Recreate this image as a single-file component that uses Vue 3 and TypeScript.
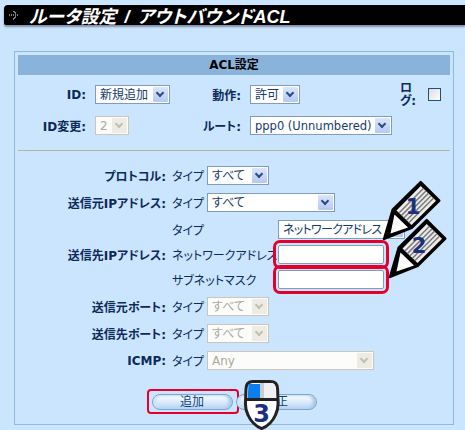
<template>
  <div class="page">
    <h1 class="title-bar">
      <svg class="title-mark" viewBox="0 0 9 9">
        <path d="M0 4h1M2 4h1M4 4h1M6 4h1M8 4h1M6 2h1M6 6h1M4 0h1M4 8h1M5 1h1M5 7h1" stroke="#fff" stroke-width="1" />
      </svg>
      ルータ設定 / アウトバウンドACL
    </h1>

    <section class="panel">
      <div class="panel-head">ACL設定</div>

      <div class="top-grid">
        <label class="field-label">ID:</label>
        <span class="select w-75">
          <select><option>新規追加</option></select>
        </span>
        <label class="field-label">動作:</label>
        <span class="select w-50">
          <select><option>許可</option></select>
        </span>
        <label class="log-label">ログ:</label>
        <span class="checkbox"></span>

        <label class="field-label">ID変更:</label>
        <span class="select w-34 disabled">
          <select disabled><option>2</option></select>
        </span>
        <label class="field-label">ルート:</label>
        <span class="select w-142 compact">
          <select><option>ppp0 (Unnumbered)</option></select>
        </span>
      </div>

      <hr class="divider" />

      <div class="form-grid">
        <template v-for="row in upperRows" :key="row.label">
          <label class="field-label">{{ row.label }}:</label>
          <div class="type-cell">
            <span class="type-label">タイプ</span>
            <span class="select" :class="row.width">
              <select><option>すべて</option></select>
            </span>
          </div>
        </template>

        <label class="field-label">送信先IPアドレス:</label>
        <div class="dest-grid">
          <span class="type-label">タイプ</span>
          <span class="select w-127 tight">
            <select><option>ネットワークアドレス</option></select>
          </span>
          <span class="type-label">ネットワークアドレス</span>
          <input class="text-input marked" type="text" />
          <span class="type-label">サブネットマスク</span>
          <input class="text-input marked" type="text" />
        </div>

        <template v-for="row in lowerRows" :key="row.label">
          <label class="field-label">{{ row.label }}:</label>
          <div class="type-cell">
            <span class="type-label">タイプ</span>
            <span class="select disabled" :class="row.width">
              <select disabled><option>{{ row.value }}</option></select>
            </span>
          </div>
        </template>
      </div>

      <div class="actions">
        <button class="pill pill-marked" type="button">追加</button>
        <button class="pill" type="button">訂正</button>
      </div>
    </section>

    <svg class="callouts" viewBox="0 0 465 430">
      <defs>
        <g id="pencil">
          <path d="M0 0L8.7-29.3L36.7-57L55.3-38.3L27.7-11Z" fill="#000" stroke="#000" stroke-width="2.4" stroke-linejoin="round" />
          <path d="M12.5-28.5L36.7-53L52-38.3L27.5-14Z" fill="#ececec" />
          <path d="M15-26L39.3-50.5M17.6-23.6L41.9-48M20-21.25L44.35-45.65M22.5-18.8L47-43.2M25-16.5L49.4-40.8" stroke="#7c7c7c" stroke-width="1.6" />
          <path d="M10.5-24.5L24-11.5L6.5-5.5Z" fill="#fff" />
        </g>
      </defs>

      <use href="#pencil" x="384" y="239" />
      <text class="callout-num" x="413" y="214">1</text>
      <use href="#pencil" x="390" y="277" />
      <text class="callout-num" x="419" y="253">2</text>

      <path d="M253 381.5H270Q277.6 381.5 277.6 389L278 402Q278.4 409 275.5 415Q271 425 261.7 428.6Q252.4 425 248 415Q245 409 245.5 402L246 389Q246 381.5 253 381.5Z" fill="#fff" stroke="#222" stroke-width="3" />
      <path d="M248.5 384H260V398H247.6Z" fill="#0a80f0" />
      <rect x="260" y="383" width="4" height="15" fill="#c9ccd0" />
      <path d="M264 383H272Q275 383 275.4 388V398H264Z" fill="#eef0f2" />
      <path d="M246 399.5H278" stroke="#222" stroke-width="3" />
      <text class="callout-num mouse-num" x="261.7" y="422">3</text>
    </svg>
  </div>
</template>

<script setup lang="ts">
const upperRows = [
  { label: 'プロトコル', width: 'w-62' },
  { label: '送信元IPアドレス', width: 'w-128' },
]

const lowerRows = [
  { label: '送信元ポート', width: 'w-62', value: 'すべて' },
  { label: '送信先ポート', width: 'w-62', value: 'すべて' },
  { label: 'ICMP', width: 'w-167', value: 'Any' },
]
</script>

<style>
html,
body {
  margin: 0;
  background: #cce5fe;
}
</style>

<style scoped>
.page {
  position: relative;
  width: 465px;
  height: 430px;
  overflow: hidden;
  background: #cce5fe;
  color: #0b2a5a;
  font-family: "DejaVu Sans", "Noto Sans CJK JP", sans-serif;
  font-size: 12px;
  font-feature-settings: "palt";
}

.title-bar {
  display: flex;
  align-items: center;
  box-sizing: border-box;
  height: 20px;
  margin: 5px 0 0 4px;
  padding-left: 5px;
  border-radius: 4px 0 0 2px;
  background: #000;
  box-shadow: 0 2px 2px #7e90a6;
  color: #fff;
  font-family: "Liberation Sans", "Noto Sans CJK JP", sans-serif;
  font-size: 18px;
  font-style: italic;
  font-weight: 700;
  word-spacing: 3px;
  white-space: pre;
}

.title-mark {
  width: 9px;
  height: 9px;
  margin-right: 3px;
}

.panel {
  box-sizing: border-box;
  width: 440px;
  height: 374px;
  margin: 26px 0 0 14px;
  padding: 3px;
  border: 1px solid #8fb8de;
}

.panel-head {
  height: 20px;
  background: #8ab3dc;
  color: #000;
  font-weight: 700;
  line-height: 21px;
  text-align: center;
}

.top-grid {
  display: grid;
  grid-template-columns: 69px 75px 64px 142px 20px 13px;
  grid-auto-rows: 19px;
  align-items: center;
  gap: 12px 8px;
  margin-top: 10px;
}

.field-label {
  padding-right: 1px;
  font-weight: 700;
  text-align: right;
  white-space: nowrap;
}

.log-label {
  margin: -3px 0;
  font-weight: 700;
  line-height: 13px;
}

.checkbox {
  box-sizing: border-box;
  width: 13px;
  height: 13px;
  border: 1px solid #1c5180;
  background: linear-gradient(135deg, #dcdcd7, #fff);
}

.divider {
  height: 1px;
  margin: 15px 0 15px;
  border: 0;
  background: #b7b69a;
}

.form-grid {
  display: grid;
  grid-template-columns: 149px 1fr;
  align-items: center;
  gap: 8px 5px;
}

.type-cell {
  display: flex;
  align-items: center;
}

.type-label {
  width: 35px;
  flex: none;
  white-space: nowrap;
}

.dest-grid {
  display: grid;
  grid-template-columns: 106px 1fr;
  grid-auto-rows: 19px;
  align-items: center;
  row-gap: 6px;
}

.select {
  position: relative;
  display: block;
  box-sizing: border-box;
  height: 19px;
  flex: none;
  border: 1px solid #7f9db9;
  background: #fff;
}

.select select {
  display: block;
  width: 100%;
  height: 100%;
  padding: 0 0 0 4px;
  border: 0;
  border-radius: 0;
  outline: 0;
  appearance: none;
  background: transparent;
  color: #143a6c;
  font: inherit;
  font-feature-settings: "palt";
}

.select.compact select {
  font-size: 11.5px;
}

.select.tight select {
  letter-spacing: -0.7px;
}

.select::after {
  content: "";
  position: absolute;
  top: 1px;
  right: 1px;
  bottom: 1px;
  width: 15px;
  border-radius: 1px;
  background: linear-gradient(#dbe5fb, #b5c9f5);
  pointer-events: none;
}

.select::before {
  content: "";
  position: absolute;
  z-index: 1;
  top: 4px;
  right: 6px;
  width: 4px;
  height: 4px;
  border-right: 2px solid #274d86;
  border-bottom: 2px solid #274d86;
  transform: rotate(45deg);
  pointer-events: none;
}

.select.disabled {
  border-color: #c9c7ba;
  background: #fcfcfa;
}

.select.disabled select {
  color: #aca899;
  opacity: 1;
}

.select.disabled::after {
  background: #ecebe4;
}

.select.disabled::before {
  border-color: #c2c0b0;
}

.w-34 { width: 34px; }
.w-50 { width: 50px; }
.w-62 { width: 62px; }
.w-75 { width: 75px; }
.w-127 { width: 127px; }
.w-128 { width: 128px; }
.w-142 { width: 142px; }
.w-167 { width: 167px; }

.text-input {
  box-sizing: border-box;
  width: 106px;
  height: 19px;
  padding: 0;
  border: 1px solid #7f9db9;
  background: #fff;
}

.marked {
  outline: 3px solid #e4002b;
  outline-offset: 2px;
  border-radius: 2px;
}

.actions {
  display: flex;
  justify-content: center;
  gap: 3px;
  margin-top: 24px;
}

.pill {
  position: relative;
  width: 81px;
  height: 16px;
  padding: 0;
  border: 1px solid #7ba6cf;
  border-radius: 8px;
  background: linear-gradient(#f6fbff 10%, #d3e7fb 60%, #b6d2ee);
  box-shadow: inset -3px 0 3px #a9c8e8, inset 3px 0 3px #cfe3f7;
  color: #123f86;
  font: inherit;
  font-feature-settings: "palt";
  line-height: 14px;
}

.pill-marked::after {
  content: "";
  position: absolute;
  inset: -6px -7px -5px -6px;
  border: 2px solid #e4002b;
  border-radius: 4px;
}

.callouts {
  position: absolute;
  z-index: 2;
  top: 0;
  left: 0;
  width: 465px;
  height: 430px;
  pointer-events: none;
}

.callout-num {
  fill: #1b2f7e;
  font-family: "DejaVu Sans", sans-serif;
  font-size: 21px;
  font-weight: 700;
  text-anchor: middle;
}

.mouse-num {
  font-size: 24px;
}
</style>
